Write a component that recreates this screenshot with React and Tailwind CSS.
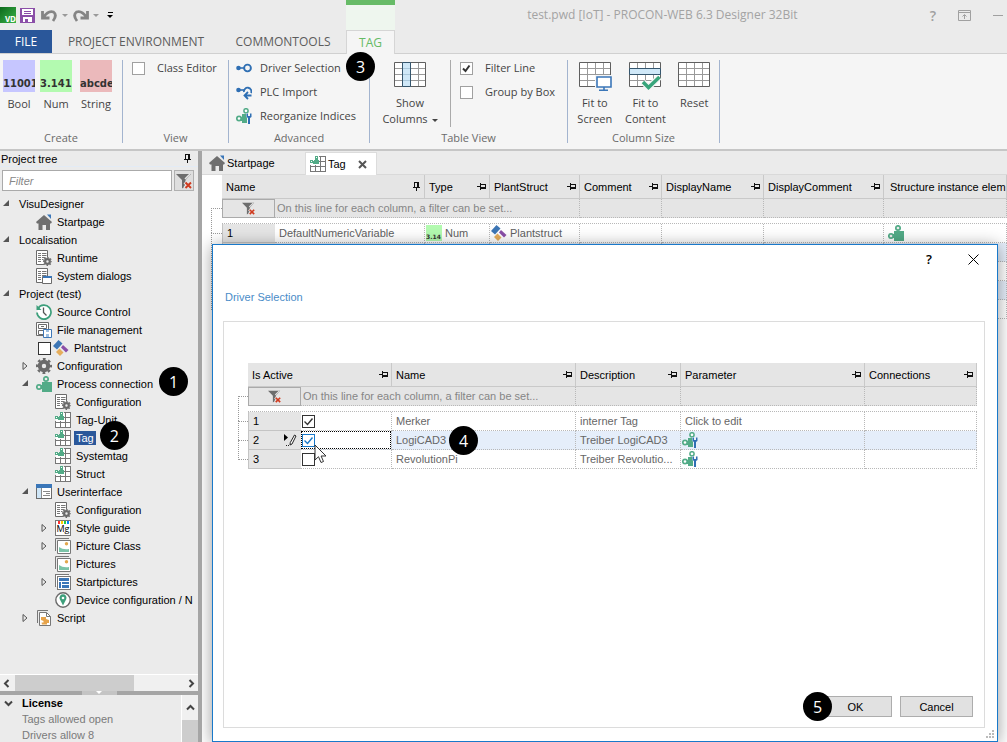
import { useState } from 'react'
import clsx from 'clsx'

/* ---------- Icons ---------- */

function Pin({ upright }) {
  return (
    <svg width="9" height="9" viewBox="0 0 9 9" shapeRendering="crispEdges" className={clsx('shrink-0', upright && '-rotate-90')} aria-hidden>
      <path d="M0 4h3v1H0zM3 1h1v7H3zM4 2h5v1H4zM8 2h1v5H8zM4 5h5v2H4z" fill="#111" />
    </svg>
  )
}

function Funnel({ size = 16 }) {
  return (
    <svg width={size} height={size} viewBox="0 0 16 16" className="shrink-0" aria-hidden>
      <path d="M0 1h15L9.500 7v6L6 15.500V7z" fill="#6d6d6d" />
      <path d="M9 6l5-5" stroke="#e5e5e5" strokeWidth="1.500" />
      <path d="M9 9l6 6M15 9l-6 6" stroke="#e5e5e5" strokeWidth="4" />
      <path d="M9.500 9.500l5.500 5.500M15 9.500L9.500 15" stroke="#d03b1f" strokeWidth="2" />
    </svg>
  )
}

function House() {
  return (
    <svg width="16" height="16" viewBox="0 0 16 16" className="shrink-0" aria-hidden>
      <path d="M8 1l8 7-1 1.500h-1V16h-4v-5H6.500v5H2.500V9.500H1L0 8z" fill="#6f6f6f" />
      <path d="M11 .5h4V5z" fill="#3a76b8" />
    </svg>
  )
}

function Gear({ x = 0, y = 0, scale = 1 }) {
  return (
    <g transform={`translate(${x} ${y}) scale(${scale})`}>
      <circle cx="8" cy="8" r="4.200" fill="none" stroke="#6b6b6b" strokeWidth="4" />
      <circle cx="8" cy="8" r="7" fill="none" stroke="#6b6b6b" strokeWidth="2.200" strokeDasharray="2.750 2.750" strokeDashoffset="1.370" />
    </g>
  )
}

function GearIcon() {
  return (
    <svg width="16" height="16" viewBox="0 0 16 16" className="shrink-0" aria-hidden>
      <Gear />
    </svg>
  )
}

function Page({ children }) {
  return (
    <svg width="16" height="16" viewBox="0 0 16 16" className="shrink-0" aria-hidden>
      <path d="M.5 .5h11v14H.5z" fill="#fff" stroke="#6b6b6b" />
      <path d="M2 3.500h3M6 3.500h4.500M2 5.500h3M6 5.500h4.500M2 7.500h3M6 7.500h4.500M2 9.500h3M6 9.500h3M2 11.500h3" stroke="#777" />
      {children}
    </svg>
  )
}

function PageGear() {
  return (
    <Page>
      <circle cx="11.500" cy="11.500" r="4.500" fill="#ebebeb" />
      <Gear x={7} y={7} scale={0.56} />
    </Page>
  )
}

function PageWindow() {
  return (
    <Page>
      <path d="M6.500 8.500h9v7h-9z" fill="#fff" stroke="#6b6b6b" />
      <path d="M7 8h9v2H7z" fill="#3a76b8" />
    </Page>
  )
}

function Clock() {
  return (
    <svg width="16" height="16" viewBox="0 0 16 16" className="shrink-0" aria-hidden>
      <path d="M2 4.500A7 7 0 1 1 1 8.500" fill="#fff" stroke="#3d9f7b" strokeWidth="1.700" />
      <path d="M.5 1v5h5z" fill="#3d9f7b" />
      <path d="M7.500 3.500v5l3 3" fill="none" stroke="#555" strokeWidth="1.300" />
    </svg>
  )
}

function FileMgmt() {
  return (
    <svg width="16" height="16" viewBox="0 0 16 16" className="shrink-0" aria-hidden>
      <path d="M.5 .5h12v13H.5zM2.500 2.500h8v4h-8zM2.500 8.500h8v4h-8z" fill="#fff" stroke="#6b6b6b" />
      <path d="M5 4.500h3" stroke="#6b6b6b" />
      <path d="M7.500 7.500h8v8h-8z" fill="#fff" stroke="#3f78b8" />
      <path d="M10 8h3v2h-3zM10 12h3v3h-3z" fill="#9dbfe2" />
    </svg>
  )
}

function Diamonds() {
  return (
    <svg width="16" height="16" viewBox="0 0 16 16" className="shrink-0" aria-hidden>
      <path d="M5.500 0L9.500 3.500 4 9.500 0 6z" fill="#3d76b5" />
      <path d="M10 5l5.500 5-2.500 2.500-5-5z" fill="#8a4fa8" />
      <path d="M6.500 8.500l4 4-3.500 3.500-4-4z" fill="#e6ad5b" />
    </svg>
  )
}

function Puzzle() {
  return (
    <svg width="16" height="16" viewBox="0 0 16 16" className="shrink-0" aria-hidden>
      <path d="M6 6h10v10H6v-3H4V9h2z" fill="#52ab87" />
      <circle cx="3" cy="11" r="2.200" fill="#ebebeb" stroke="#52ab87" strokeWidth="1.700" />
      <circle cx="10" cy="3" r="2.200" fill="#ebebeb" stroke="#52ab87" strokeWidth="1.700" />
    </svg>
  )
}

function PuzzleWrench() {
  return (
    <svg width="16" height="16" viewBox="0 0 16 16" className="shrink-0" aria-hidden>
      <path d="M6 6h5v9H6v-2H4V9h2z" fill="#52ab87" />
      <circle cx="3" cy="10.500" r="2.200" fill="#fff" stroke="#52ab87" strokeWidth="1.700" />
      <circle cx="10" cy="2.800" r="2.100" fill="#fff" stroke="#52ab87" strokeWidth="1.500" />
      <path d="M10.500 5.500V9l1.500 1v6h2v-6l1.500-1V5.500h-1.500V8h-2V5.500z" fill="#2f6fb3" stroke="#f5f5f5" strokeWidth=".8" paintOrder="stroke" />
    </svg>
  )
}

function TagTable() {
  return (
    <svg width="16" height="16" viewBox="0 0 16 16" shapeRendering="crispEdges" className="shrink-0" aria-hidden>
      <path d="M5.500 .5h10v15H.5v-10h5z" fill="#fff" />
      <path d="M10.500 .5v15M5.500 9v7M9 5.500h7M.5 10.500h15M9 .5h6.500v15H.5V9" fill="none" stroke="#777" />
      <path d="M4 4h5v4H3V5h1zM5 0h3v4H5zM0 4h3v3H0z" fill="#52ab87" />
      <path d="M6 1h1v1H6zM1 5h1v1H1z" fill="#fff" />
    </svg>
  )
}

function WindowIcon() {
  return (
    <svg width="16" height="16" viewBox="0 0 16 16" shapeRendering="crispEdges" className="shrink-0" aria-hidden>
      <path d="M.5 .5h15v14H.5z" fill="#fff" stroke="#6b6b6b" />
      <path d="M0 0h16v4H0z" fill="#3a76b8" />
      <path d="M1 4h4v10H1z" fill="#cfe6f7" />
      <path d="M5.500 4v10M7 7.500h7M10 9.500h4M7 11.500h7" stroke="#8a8a8a" />
    </svg>
  )
}

function StyleGuide() {
  return (
    <span className="flex h-4 w-4 shrink-0 flex-col overflow-hidden border border-[#777] bg-white" aria-hidden>
      <span className="flex h-[3px] shrink-0 justify-center gap-px">
        <span className="w-[2px] bg-[#f33]" />
        <span className="w-[2px] bg-[#fc0]" />
        <span className="w-[2px] bg-[#2c4]" />
        <span className="w-[2px] bg-[#08f]" />
      </span>
      <span className="text-center font-['Open_Sans',sans-serif] text-[9px] leading-[9px] text-black">Mg</span>
    </span>
  )
}

function Picture() {
  return (
    <svg width="16" height="16" viewBox="0 0 16 16" className="shrink-0" aria-hidden>
      <path d="M.5 13V.5H14" fill="none" stroke="#777" />
      <path d="M2.500 2.500h13v13h-13z" fill="#fff" stroke="#777" />
      <path d="M4 9q4 3 10 2v3H4z" fill="#7cc4a8" />
      <circle cx="11.500" cy="5.800" r="1.700" fill="#e3a84d" />
    </svg>
  )
}

function StartPictures() {
  return (
    <svg width="16" height="16" viewBox="0 0 16 16" shapeRendering="crispEdges" className="shrink-0" aria-hidden>
      <path d="M.5 13V.5H14M2.500 2.500h13v13h-13z" fill="#fff" stroke="#777" />
      <path d="M4 4h10v3H4zM4 8h2v6H4zM7 8h7v2H7zM7 11h7v3H7z" fill="#3a76b8" />
    </svg>
  )
}

function Device() {
  return (
    <svg width="16" height="16" viewBox="0 0 16 16" className="shrink-0" aria-hidden>
      <circle cx="8" cy="8" r="7.200" fill="#fff" stroke="#6b6b6b" strokeWidth="1.400" />
      <path d="M8 13.500L4.700 7a3.500 3.500 0 1 1 6.600 0z" fill="#3d9f7b" />
      <circle cx="8" cy="6" r="1.300" fill="#fff" />
    </svg>
  )
}

function Script() {
  return (
    <svg width="16" height="16" viewBox="0 0 16 16" className="shrink-0" aria-hidden>
      <path d="M1.500 13V.5H12" fill="none" stroke="#777" />
      <path d="M3.500 2.500h7l4 4v9h-11z" fill="#fff" stroke="#777" />
      <path d="M10.500 2.500v4h4" fill="none" stroke="#777" />
      <path d="M5 7h5v2l3 1v3h-2v1.500H6l-.5-2h2V11L5 10z" fill="#e6a34a" />
    </svg>
  )
}

function GridIcon({ kind }) {
  return (
    <svg width="34" height="30" viewBox="0 0 34 30" className="shrink-0" aria-hidden>
      <path d="M1.500 1.500h31v24h-31z" fill="#fff" />
      <path d="M9.500 1v24M17.500 1v24M25.500 1v24M1 7.500h31M1 13.500h31M1 19.500h31" stroke="#999" />
      <path d="M1.500 1.500h31v24h-31z" fill="none" stroke="#5f5f5f" />
      {kind === 'columns' && <path d="M9.500 1.500h8v24h-8z" fill="#cfe8f8" stroke="#35566e" />}
      {kind === 'columns' && <path d="M10 7.500h7M10 13.500h7M10 19.500h7" stroke="#a9c8dc" />}
      {kind === 'content' && <path d="M1.500 7.500h31v6h-31z" fill="#cfe8f8" stroke="#35566e" />}
      {kind === 'content' && <path d="M15 21l5.500 5.500L31.500 16" fill="none" stroke="#f5f5f5" strokeWidth="6" />}
      {kind === 'content' && <path d="M15 21l5.500 5.500L31.500 16" fill="none" stroke="#38a57b" strokeWidth="3.500" />}
      {kind === 'screen' && <path d="M17 14h17v16H17z" fill="#f5f5f5" />}
      {kind === 'screen' && <path d="M19 16h14v10H19zM26 26v3M21 29.300h9" fill="#fff" stroke="#3a76b8" strokeWidth="1.600" />}
    </svg>
  )
}

function Link({ arrow }) {
  return (
    <svg width="16" height="16" viewBox="0 0 16 16" className="shrink-0" aria-hidden>
      <circle cx="2.500" cy={arrow ? 6 : 8} r="2.300" fill="#2f6fb3" />
      <path d={arrow ? 'M2 6h6' : 'M2 8h6'} stroke="#2f6fb3" strokeWidth="1.600" />
      {arrow ? (
        <>
          <path d="M8 8a3.700 3.700 0 1 1 7 1" fill="none" stroke="#2f6fb3" strokeWidth="1.800" />
          <path d="M15.500 11.500H9M12 8l-3.500 3.500L12 15" fill="none" stroke="#2f6fb3" strokeWidth="1.800" />
        </>
      ) : (
        <circle cx="11.500" cy="8" r="3.400" fill="none" stroke="#2f6fb3" strokeWidth="1.900" />
      )}
    </svg>
  )
}

function Chevron({ className }) {
  return (
    <svg width="9" height="9" viewBox="0 0 9 9" className={className} aria-hidden>
      <path d="M6.500 1L3 4.500 6.500 8" fill="none" stroke="#444" strokeWidth="2" />
    </svg>
  )
}

/* ---------- Small parts ---------- */

function Badge({ n, className }) {
  return (
    <span
      className={clsx(
        "absolute z-20 flex h-[29px] w-[29px] items-center justify-center rounded-full bg-black font-['Open_Sans',sans-serif] text-[16px] leading-none text-white",
        className,
      )}
    >
      {n}
    </span>
  )
}

function Check({ label, checked, tone = 'border-[#999]', mark = '#222' }) {
  return (
    <span className="relative block h-[13px] w-[13px] shrink-0">
      <input
        type="checkbox"
        defaultChecked={checked}
        aria-label={label}
        className={clsx('peer block h-[13px] w-[13px] appearance-none border bg-white', tone)}
      />
      <svg viewBox="0 0 13 13" className="pointer-events-none absolute inset-0 hidden peer-checked:block" aria-hidden>
        <path d="M2.500 6.500l3 3 5-6" fill="none" stroke={mark} strokeWidth="1.400" />
      </svg>
    </span>
  )
}

function RibbonCheck({ label, checked }) {
  return (
    <label className="flex h-6 items-center gap-3 whitespace-nowrap">
      <span className="relative block h-[13px] w-[13px] shrink-0">
        <input type="checkbox" defaultChecked={checked} className="peer block h-[13px] w-[13px] appearance-none border border-[#a0a0a0] bg-white" />
        <svg viewBox="0 0 13 13" className="pointer-events-none absolute inset-0 hidden peer-checked:block" aria-hidden>
          <path d="M3 6.500l2.500 2.500 4-5.500" fill="none" stroke="#333" strokeWidth="2" />
        </svg>
      </span>
      {label}
    </label>
  )
}

function Group({ title, className, children }) {
  return (
    <section className={clsx('my-1.5 flex shrink-0 flex-col justify-between border-r border-[#a3b4cf]', className)}>
      <div className="flex">{children}</div>
      <h2 className="text-center leading-[10px] text-[#6b6b6b]">{title}</h2>
    </section>
  )
}

function TypeTile({ sample, label, tone }) {
  return (
    <button type="button" className="flex flex-col items-center">
      <span className={clsx("flex h-8 w-8 items-end overflow-hidden pb-0.5 font-['DejaVu_Sans',sans-serif] text-[10px] leading-3 font-bold text-[#333]", tone)}>
        {sample}
      </span>
      <span className="mt-1 leading-4">{label}</span>
    </button>
  )
}

function BigButton({ kind, lines, menu, className }) {
  return (
    <button type="button" className={clsx('flex flex-col items-center pt-px', className)}>
      <GridIcon kind={kind} />
      <span className="mt-1 leading-4">
        {lines[0]}
        {lines[1] && <br />}
        {lines[1]}
        {menu && <span className="ml-1 inline-block border-x-[3px] border-t-[3px] border-x-transparent border-t-[#444] align-middle" />}
      </span>
    </button>
  )
}

/* ---------- Header and ribbon ---------- */

function Header() {
  return (
    <header className="flex h-[54px] shrink-0 bg-[#ebebeb] text-[#5c5c5c]">
      <div className="flex w-[346px] shrink-0 flex-col">
        <div className="flex h-[30px] items-center gap-1">
          <span className="flex h-4 w-4 items-end justify-end bg-linear-to-br from-[#0a6a1c] to-[#3bb54a] text-[8px] leading-[9px] font-bold text-white">VD</span>
          <button type="button" aria-label="Save">
            <svg width="15" height="15" viewBox="0 0 15 15" shapeRendering="crispEdges">
              <path d="M0 0h15v15H0z" fill="#8b4fa8" />
              <path d="M2 1h11v6H2zM3 9h9v5H3z" fill="#fff" />
              <path d="M4 3h7v1H4zM4 5h7v1H4zM5 11h3v3H5z" fill="#8b4fa8" />
            </svg>
          </button>
          <button type="button" aria-label="Undo" className="ml-0.5 flex items-center gap-1">
            <svg width="17" height="14" viewBox="0 0 17 14">
              <path d="M1.500 3v7h7M2.500 9q5-7 10-5 4 3-.5 9" fill="none" stroke="#858585" strokeWidth="2.800" />
            </svg>
            <span className="border-x-[3px] border-t-[3px] border-x-transparent border-t-[#999]" />
          </button>
          <button type="button" aria-label="Redo" className="flex items-center gap-1">
            <svg width="17" height="14" viewBox="0 0 17 14" className="-scale-x-100">
              <path d="M1.500 3v7h7M2.500 9q5-7 10-5 4 3-.5 9" fill="none" stroke="#858585" strokeWidth="2.800" />
            </svg>
            <span className="border-x-[3px] border-t-[3px] border-x-transparent border-t-[#999]" />
          </button>
          <button type="button" aria-label="Customize" className="ml-1 flex flex-col items-center gap-0.5">
            <span className="h-px w-[5px] bg-black" />
            <span className="border-x-[3px] border-t-[3px] border-x-transparent border-t-black" />
          </button>
        </div>
        <nav className="flex h-6 items-stretch border-b border-[#d0d0d0] leading-6 whitespace-nowrap">
          <button type="button" className="w-[52px] bg-[#2a579a] text-white">FILE</button>
          <button type="button" className="w-[168px]">PROJECT ENVIRONMENT</button>
          <button type="button" className="w-[126px]">COMMONTOOLS</button>
        </nav>
      </div>
      <div className="flex w-[49px] shrink-0 flex-col border-t-[5px] border-[#66bb66] bg-[#eef6ee]">
        <button type="button" className="mt-auto h-6 border-x border-t border-[#d5d5d5] bg-[#f5f5f5] text-[#66bb66]">TAG</button>
      </div>
      <div className="flex grow border-b border-[#d0d0d0]">
        <h1 className="grow text-center leading-[30px] text-[#a3a3a3]">test.pwd [IoT] - PROCON-WEB 6.3 Designer 32Bit</h1>
        <div className="flex h-[30px] shrink-0 items-center gap-[22px] text-[#a0a0a0]">
          <button type="button" className="text-[14px] font-semibold" aria-label="Help">?</button>
          <button type="button" aria-label="Ribbon options">
            <svg width="13" height="11" viewBox="0 0 13 11">
              <path d="M.5 .5h12v10H.5zM0 2.500h12M6.500 9V5M4.500 6.500l2-2 2 2" fill="none" stroke="#a0a0a0" />
            </svg>
          </button>
          <button type="button" aria-label="Minimize" className="mr-1 h-px w-2.5 bg-[#a0a0a0]" />
        </div>
      </div>
    </header>
  )
}

function Ribbon() {
  return (
    <div className="flex h-[97px] shrink-0 border-b-2 border-[#c6c6c6] bg-[#f5f5f5] text-[11px] text-[#444]">
      <Group title="Create" className="w-[123px]">
        <div className="flex pl-[3px]">
          <TypeTile sample="11001" label="Bool" tone="bg-[#c6c6ff]" />
          <div className="flex gap-2 pl-[5px]">
            <TypeTile sample="3.141" label="Num" tone="bg-[#b3fab0]" />
            <TypeTile sample="abcde" label="String" tone="bg-[#ebb9bb]" />
          </div>
        </div>
      </Group>
      <Group title="View" className="w-[106px]">
        <div className="-mt-1 pl-[9px]">
          <RibbonCheck label="Class Editor" />
        </div>
      </Group>
      <Group title="Advanced" className="w-[141px]">
        <div className="relative -mt-1 flex flex-col pl-[7px]">
          <button type="button" className="flex h-6 items-center gap-2 whitespace-nowrap"><Link /> Driver Selection</button>
          <button type="button" className="flex h-6 items-center gap-2 whitespace-nowrap"><Link arrow /> PLC Import</button>
          <button type="button" className="flex h-6 items-center gap-2 whitespace-nowrap"><PuzzleWrench /> Reorganize Indices</button>
          <Badge n="3" className="-top-1 left-[117px]" />
        </div>
      </Group>
      <Group title="Table View" className="w-[198px]">
        <div className="flex w-[81px] justify-center border-r border-[#aaa]">
          <BigButton kind="columns" lines={['Show', 'Columns']} menu />
        </div>
        <div className="-mt-1 pl-[9px]">
          <RibbonCheck label="Filter Line" checked />
          <RibbonCheck label="Group by Box" />
        </div>
      </Group>
      <Group title="Column Size" className="w-[152px]">
        <BigButton kind="screen" lines={['Fit to', 'Screen']} className="w-[54px]" />
        <BigButton kind="content" lines={['Fit to', 'Content']} className="w-12" />
        <BigButton kind="plain" lines={['Reset']} className="w-[50px]" />
      </Group>
    </div>
  )
}

/* ---------- Project tree ---------- */

const TREE = [
  { level: 0, label: 'VisuDesigner', open: true },
  { level: 1, label: 'Startpage', icon: House },
  { level: 0, label: 'Localisation', open: true },
  { level: 1, label: 'Runtime', icon: PageGear },
  { level: 1, label: 'System dialogs', icon: PageWindow },
  { level: 0, label: 'Project (test)', open: true },
  { level: 1, label: 'Source Control', icon: Clock },
  { level: 1, label: 'File management', icon: FileMgmt },
  { level: 1, label: 'Plantstruct', icon: Diamonds, box: true },
  { level: 1, label: 'Configuration', icon: GearIcon, open: false },
  { level: 1, label: 'Process connection', icon: Puzzle, open: true, badge: '1' },
  { level: 2, label: 'Configuration', icon: PageGear },
  { level: 2, label: 'Tag-Unit', icon: TagTable },
  { level: 2, label: 'Tag', icon: TagTable, badge: '2' },
  { level: 2, label: 'Systemtag', icon: TagTable },
  { level: 2, label: 'Struct', icon: TagTable },
  { level: 1, label: 'Userinterface', icon: WindowIcon, open: true },
  { level: 2, label: 'Configuration', icon: PageGear },
  { level: 2, label: 'Style guide', icon: StyleGuide, open: false },
  { level: 2, label: 'Picture Class', icon: Picture, open: false },
  { level: 2, label: 'Pictures', icon: Picture },
  { level: 2, label: 'Startpictures', icon: StartPictures, open: false },
  { level: 2, label: 'Device configuration / N', icon: Device },
  { level: 1, label: 'Script', icon: Script, open: false },
]

const INDENT = ['pl-0', 'pl-[19px]', 'pl-[38px]']

function TreeRow({ item, selected, onSelect }) {
  const Icon = item.icon
  return (
    <li className={clsx('flex h-[18px] items-center whitespace-nowrap', INDENT[item.level])}>
      <span className="flex w-[17px] shrink-0 pl-[3px]">
        {item.open !== undefined && (
          <svg width="7" height="8" viewBox="0 0 7 8" aria-hidden>
            {item.open ? <path d="M6 0v6H0z" fill="#555" /> : <path d="M1 .5L5 4 1 7.500z" fill="none" stroke="#555" />}
          </svg>
        )}
      </span>
      {item.box && (
        <span className="mx-0.5">
          <Check label={item.label} tone="border-[#333]" />
        </span>
      )}
      {Icon && <Icon />}
      <span className={clsx('relative', Icon && 'ml-[3px]')}>
        <button type="button" onClick={onSelect} className={clsx('block px-0.5 leading-[14px]', selected && 'bg-[#2a579a] text-white')}>
          {item.label}
        </button>
        {item.badge && <Badge n={item.badge} className="-top-2.5 left-full ml-1" />}
      </span>
    </li>
  )
}

function Sidebar() {
  const [selected, setSelected] = useState('Tag')
  return (
    <aside className="flex w-[202px] shrink-0 flex-col border-r-4 border-[#a5a5a5] bg-[#ebebeb] text-black">
      <div className="flex h-4 items-center justify-between border-b border-[#e3ebf5] pr-1.5 pl-px">
        <h2>Project tree</h2>
        <Pin upright />
      </div>
      <div className="mt-[3px] flex gap-0.5 px-0.5">
        <input aria-label="Filter" placeholder="Filter" className="h-[21px] w-[170px] border border-[#aaa] bg-white px-1.5 italic placeholder:text-[#888]" />
        <button type="button" aria-label="Clear filter" className="flex h-[21px] w-5 items-center justify-center border border-[#b0b0b0] bg-[#dedede]">
          <Funnel />
        </button>
      </div>
      <ul className="mt-1 grow overflow-hidden">
        {TREE.map((item, i) => (
          <TreeRow key={i} item={item} selected={item.label === selected} onSelect={() => setSelected(item.label)} />
        ))}
      </ul>
      <div className="flex h-[17px] shrink-0 items-center justify-between border-t border-white bg-[#f0f0f0] px-0.5">
        <Chevron />
        <span className="mr-auto ml-1 h-4 w-[119px] bg-[#cdcdcd]" />
        <Chevron className="rotate-180" />
      </div>
      <div className="flex h-1 shrink-0 justify-center bg-[#a5a5a5]">
        <span className="flex w-[35px] justify-center bg-[#c4c4c4]">
          <span className="h-0 border-x-[3px] border-t-[3px] border-x-transparent border-t-white" />
        </span>
      </div>
      <div className="flex h-[47px] shrink-0">
        <Chevron className="mt-1 ml-1 -rotate-90" />
        <dl className="ml-[9px] grow overflow-hidden leading-4 text-[#7a7a7a]">
          <dt className="font-bold text-black">License</dt>
          <dd>Tags allowed open</dd>
          <dd>Drivers allow 8</dd>
        </dl>
        <div className="flex w-[17px] flex-col items-center border-l border-white bg-[#f0f0f0]">
          <Chevron className="my-2 rotate-90" />
          <span className="w-full grow bg-[#cdcdcd]" />
        </div>
      </div>
    </aside>
  )
}

/* ---------- Data grids ---------- */

const HEAD = 'border-r border-b border-[#c9c9c9] bg-[#e5e5e5] text-left font-normal text-black'
const CELL = 'h-[19px] border-r border-b border-dotted border-[#b8b8b8] p-0'
const NUM = 'h-[19px] border-b border-l border-[#c4c4c4] bg-[#e5e5e5] p-0 pl-1 text-left font-normal text-black'

function HeadCell({ label, span, upright }) {
  return (
    <th colSpan={span} className={clsx(HEAD, 'h-6 p-0')}>
      <div className="flex items-center justify-between overflow-hidden pr-[3px] pl-1 whitespace-nowrap">
        {label}
        <Pin upright={upright} />
      </div>
    </th>
  )
}

function FilterRow({ span, rest }) {
  return (
    <tr className="bg-[#e5e5e5]">
      <td className="h-[19px] border border-[#aaa] p-0">
        <button type="button" aria-label="Clear filters" className="flex w-full justify-center">
          <Funnel size={13} />
        </button>
      </td>
      <td colSpan={span} className={clsx(CELL, 'pl-0.5 text-[#858585]')}>On this line for each column, a filter can be set...</td>
      {Array.from({ length: rest }, (_, i) => <td key={i} className={CELL} />)}
    </tr>
  )
}

function TagGrid() {
  return (
    <div className="flex grow overflow-hidden">
      <div className="w-5 shrink-0 pt-[33px] pl-[9px]">
        <div className="h-[25px] border-t border-l border-dotted border-[#999]" />
        <div className="h-[77px] border-t border-l border-dotted border-[#999]" />
      </div>
      <div className="min-w-0 grow">
        <table className="w-full table-fixed border-separate border-spacing-0 text-[#5f5f5f]">
          <colgroup>
            <col className="w-[53px]" />
            <col className="w-[150px]" />
            <col className="w-[65px]" />
            <col className="w-[90px]" />
            <col className="w-[82px]" />
            <col className="w-[102px]" />
            <col className="w-[120px]" />
            <col />
          </colgroup>
          <thead>
            <tr>
              <HeadCell label="Name" span={2} upright />
              <HeadCell label="Type" />
              <HeadCell label="PlantStruct" />
              <HeadCell label="Comment" />
              <HeadCell label="DisplayName" />
              <HeadCell label="DisplayComment" />
              <th className={clsx(HEAD, 'overflow-hidden p-0 pl-1.5 whitespace-nowrap')}>Structure instance elem</th>
            </tr>
            <FilterRow span={3} rest={4} />
          </thead>
          <tbody>
            <tr>
              <td colSpan={8} className="h-[6px] border-b border-dotted border-[#b8b8b8] p-0" />
            </tr>
            <tr>
              <th className={NUM}>1</th>
              <td className={clsx(CELL, 'pl-1')}>DefaultNumericVariable</td>
              <td className={CELL}>
                <div className="flex h-[18px] items-center gap-[3px] pl-px">
                  <span className="flex h-4 w-4 items-end overflow-hidden bg-[#b3fab0] font-['DejaVu_Sans',sans-serif] text-[6px] leading-[9px] font-bold text-[#333]">3.14</span>
                  Num
                </div>
              </td>
              <td className={CELL}>
                <div className="flex h-[18px] items-center gap-[3px] pl-px"><Diamonds /> Plantstruct</div>
              </td>
              <td className={CELL} />
              <td className={CELL} />
              <td className={CELL} />
              <td className={clsx(CELL, 'pl-1')}><Puzzle /></td>
            </tr>
            {[2, 3, 4, 5].map((n) => (
              <tr key={n} className={n % 2 === 0 ? 'bg-[#e5eefa]' : 'bg-white'}>
                <th className={NUM} />
                {[0, 1, 2, 3, 4, 5, 6].map((c) => <td key={c} className={CELL} />)}
              </tr>
            ))}
          </tbody>
        </table>
      </div>
    </div>
  )
}

const DRIVERS = [
  { name: 'Merker', desc: 'interner Tag', active: true },
  { name: 'LogiCAD3', desc: 'Treiber LogiCAD3', active: true, editing: true },
  { name: 'RevolutionPi', desc: 'Treiber Revolutio...', active: false },
]

function DriverGrid() {
  return (
    <div className="flex pl-[14px]">
      <div className="w-2.5 shrink-0 pt-[33px]">
        <div className="h-[25px] border-t border-l border-dotted border-[#999]" />
        <div className="h-[19px] border-t border-l border-dotted border-[#999]" />
        <div className="h-5 border-y border-l border-dotted border-[#999]" />
      </div>
      <table className="w-full table-fixed border-separate border-spacing-0 text-[#666]">
        <colgroup>
          <col className="w-[53px]" />
          <col className="w-[91px]" />
          <col className="w-[184px]" />
          <col className="w-[105px]" />
          <col className="w-[184px]" />
          <col />
        </colgroup>
        <thead>
          <tr>
            <HeadCell label="Is Active" span={2} />
            <HeadCell label="Name" />
            <HeadCell label="Description" />
            <HeadCell label="Parameter" />
            <HeadCell label="Connections" />
          </tr>
          <FilterRow span={2} rest={3} />
        </thead>
        <tbody>
          <tr>
            <td colSpan={6} className="h-[6px] border-b border-dotted border-[#b8b8b8] p-0" />
          </tr>
          {DRIVERS.map((d, i) => (
            <tr key={d.name} className={d.editing ? 'bg-[#e5eefa]' : 'bg-white'}>
              <th className={NUM}>
                <div className="flex items-center justify-between pr-1">
                  {i + 1}
                  {d.editing && (
                    <svg width="13" height="12" viewBox="0 0 13 12" aria-hidden>
                      <path d="M0 0l4 3.500L0 7z" fill="#000" />
                      <path d="M10.500 1l1.500 1-4 8-2 1 .3-2.500zM2 11.500h1M4 11.500h1" fill="#fff" stroke="#222" />
                    </svg>
                  )}
                </div>
              </th>
              <td className={CELL}>
                <div className={clsx('relative flex h-[18px] items-center', d.editing && 'border border-dotted border-black bg-white')}>
                  <span className={d.editing ? '' : 'pl-px'}>
                    <Check label={`${d.name} active`} checked={d.active} tone={d.editing ? 'border-[#1979ca]' : 'border-[#333]'} mark={d.editing ? '#1979ca' : '#333'} />
                  </span>
                  {d.editing && (
                    <svg width="13" height="20" viewBox="0 0 13 20" className="absolute top-3 left-3 z-10" aria-hidden>
                      <path d="M1 1v15l3.500-3.300L7 18.500l2.500-1-2.400-5.500H12z" fill="#fff" stroke="#333" />
                    </svg>
                  )}
                </div>
              </td>
              <td className={clsx(CELL, 'pl-1')}>
                <span className="relative">
                  {d.name}
                  {d.editing && <Badge n="4" className="-top-2 left-full ml-[3px]" />}
                </span>
              </td>
              <td className={clsx(CELL, 'overflow-hidden pl-1 whitespace-nowrap')}>{d.desc}</td>
              <td className={clsx(CELL, i === 0 ? 'pl-1' : 'pl-px')}>{i === 0 ? 'Click to edit' : <PuzzleWrench />}</td>
              <td className={CELL} />
            </tr>
          ))}
        </tbody>
      </table>
    </div>
  )
}

function Dialog() {
  const button = 'h-[21px] w-[73px] border border-[#adadad] bg-[#e1e1e1] text-black'
  return (
    <div role="dialog" aria-label="Driver Selection" className="absolute top-[93px] right-[9px] bottom-0 left-2.5 z-10 flex flex-col border border-[#1979ca] bg-white shadow-[0_2px_16px_rgba(0,0,0,0.4)]">
      <div className="flex h-7 items-center justify-end gap-9 pr-[18px] text-black">
        <button type="button" aria-label="Help" className="font-['Open_Sans',sans-serif] text-[13px] font-semibold">?</button>
        <button type="button" aria-label="Close">
          <svg width="11" height="11" viewBox="0 0 11 11">
            <path d="M.5 .5l10 10M10.500 .5l-10 10" stroke="#000" />
          </svg>
        </button>
      </div>
      <h2 className="mt-4 pl-3 leading-4 text-[#4a8cc8]">Driver Selection</h2>
      <div className="mt-4 mr-3 mb-[13px] ml-2.5 flex grow flex-col justify-between border border-[#dcdcdc] pt-[41px] pr-[7px] pb-2.5">
        <DriverGrid />
        <div className="relative flex justify-end gap-2 self-end pr-1">
          <Badge n="5" className="-top-1 -left-4" />
          <button type="button" className={button}>OK</button>
          <button type="button" className={button}>Cancel</button>
        </div>
      </div>
      <svg width="9" height="9" viewBox="0 0 9 9" className="absolute right-0.5 bottom-0.5" aria-hidden>
        <path d="M6 0h2v2H6zM3 3h2v2H3zM6 3h2v2H6zM0 6h2v2H0zM3 6h2v2H3zM6 6h2v2H6z" fill="#bbb" />
      </svg>
    </div>
  )
}

function Workspace() {
  return (
    <main className="relative flex min-w-0 grow flex-col overflow-hidden bg-white">
      <div className="flex h-6 shrink-0 items-stretch border-b border-[#d9d9d9] bg-[#ebebeb] text-black">
        <button type="button" className="flex w-[103px] items-center gap-0.5 pl-[7px]"><House /> Startpage</button>
        <div className="mt-px -mb-px flex w-[72px] items-center border-x border-t border-[#dcdcdc] bg-white pl-1">
          <button type="button" className="flex items-center gap-0.5"><TagTable /> Tag</button>
          <button type="button" aria-label="Close tab" className="ml-3">
            <svg width="9" height="9" viewBox="0 0 9 9">
              <path d="M1 1l7 7M8 1L1 8" stroke="#555" strokeWidth="2" />
            </svg>
          </button>
        </div>
      </div>
      <TagGrid />
      <Dialog />
    </main>
  )
}

export default function App() {
  return (
    <div className="flex h-screen flex-col overflow-hidden font-['Open_Sans',sans-serif] text-[12px]">
      <Header />
      <Ribbon />
      <div className="flex min-h-0 grow font-['Liberation_Sans',Arial,sans-serif] text-[11px] leading-[14px]">
        <Sidebar />
        <Workspace />
      </div>
    </div>
  )
}
